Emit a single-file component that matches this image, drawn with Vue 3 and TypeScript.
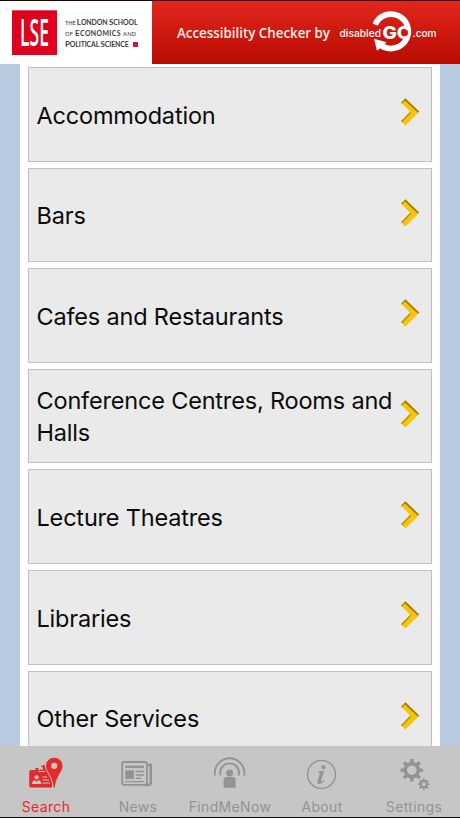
<script setup lang="ts">
interface Tab {
  id: string
  label: string
}

const categories: string[] = [
  'Accommodation',
  'Bars',
  'Cafes and Restaurants',
  'Conference Centres, Rooms and Halls',
  'Lecture Theatres',
  'Libraries',
  'Other Services',
]

const tabs: Tab[] = [
  { id: 'search', label: 'Search' },
  { id: 'news', label: 'News' },
  { id: 'find', label: 'FindMeNow' },
  { id: 'about', label: 'About' },
  { id: 'settings', label: 'Settings' },
]

const activeTab = 'search'

function gearPath(cx: number, cy: number, outer: number, inner: number, hole: number): string {
  const teeth = 8
  const step = (Math.PI * 2) / teeth
  const points: string[] = []
  for (let i = 0; i < teeth; i++) {
    const mid = i * step
    const corners: [number, number][] = [
      [mid - step * 0.28, inner],
      [mid - step * 0.17, outer],
      [mid + step * 0.17, outer],
      [mid + step * 0.28, inner],
    ]
    for (const [a, r] of corners) {
      points.push(`${(cx + Math.cos(a) * r).toFixed(2)} ${(cy + Math.sin(a) * r).toFixed(2)}`)
    }
  }
  return `M${points.join('L')}Z M${cx + hole} ${cy}a${hole} ${hole} 0 1 0 ${-2 * hole} 0a${hole} ${hole} 0 1 0 ${2 * hole} 0Z`
}

const bigGear = gearPath(15.8, 14.2, 11.4, 8.4, 4.8)
const smallGear = gearPath(27.8, 28.2, 6, 4.2, 2)
</script>

<template>
  <div class="screen">
    <header class="header">
      <div class="school">
        <svg class="lse" width="57" height="63" viewBox="0 1 57 63">
          <rect x="12" y="10.3" width="45" height="44.7" fill="#e2001f" />
          <text x="20" y="46" textLength="29" lengthAdjust="spacingAndGlyphs" fill="#fff">LSE</text>
        </svg>
        <div class="school-name">
          <div class="line one"><small>THE&nbsp;</small><span>L</span><b>ONDON&nbsp;</b><span>S</span><b>CHOOL</b></div>
          <div class="line two"><small>OF&nbsp;</small><span>E</span><b>CONOMICS&nbsp;</b><small>AND</small></div>
          <div class="line three"><span>P</span><b>OLITICAL&nbsp;</b><span>S</span><b>CIENCE</b><i class="square"></i></div>
        </div>
      </div>
      <div class="banner">
        <svg width="308" height="63" viewBox="152 1 308 63">
          <text class="checker" x="177" y="37.5" textLength="153" lengthAdjust="spacingAndGlyphs">Accessibility Checker by</text>
          <path d="M375.2 24.6A17.2 17.2 0 1 1 383.2 46.6" fill="none" stroke="#fff" stroke-width="5.8" />
          <path d="M374 38.8L386.6 42.2L384.4 44.2L386.5 45.3L383 50.2L380.3 48.2L377 50.8Z" fill="#fff" />
          <text class="disabled" x="339.5" y="36.5" textLength="41.5" lengthAdjust="spacingAndGlyphs">disabled</text>
          <text class="go" x="382.4" y="39.1" textLength="29.2" lengthAdjust="spacingAndGlyphs">GO</text>
          <ellipse cx="404.9" cy="32.8" rx="3.1" ry="3.5" fill="#ce1910" />
          <text class="disabled" x="412.6" y="36.5" textLength="24" lengthAdjust="spacingAndGlyphs">.com</text>
        </svg>
      </div>
    </header>

    <main class="content">
      <ul class="list">
        <li v-for="name in categories" :key="name" class="card">
          <span class="name">{{ name }}</span>
          <svg class="chevron" width="20" height="30" viewBox="0 0 20 30">
            <path d="M1 5.8L5.4 1.2L19.4 14.8L5.4 28.4L1 24.2L10.2 14.8Z" fill="#f6c40f" />
            <path d="M5.4 1.2L19.4 14.8L17.4 15.2L4.8 3.6L2 6.6L1 5.8Z" fill="#a3820f" />
            <path d="M1 24.2L10.2 14.8L11.2 15.8L2.2 25.2Z" fill="#b8920e" />
          </svg>
        </li>
      </ul>
    </main>

    <nav class="tabs">
      <div v-for="tab in tabs" :key="tab.id" class="tab" :class="[tab.id, { active: tab.id === activeTab }]">
        <svg v-if="tab.id === 'search'" class="icon" width="36" height="36" viewBox="0 0 36 36">
          <path d="M3 14H7.5V12H10.5V14H12L13 10.5A3.5 3.5 0 0 1 18 10L24 23V31.5H3Q1.2 31.5 1.2 29.7V15.8Q1.2 14 3 14Z" fill="currentColor" />
          <circle cx="13.5" cy="12.3" r="1.5" fill="#c6c6c6" />
          <path d="M10.3 15.5H17" stroke="#c6c6c6" stroke-width="1" />
          <circle cx="8.6" cy="21.3" r="2.1" fill="#c6c6c6" />
          <path d="M4 28Q4 24.2 7 24.2L8.6 25.8L10.2 24.2Q13.2 24.2 13.2 28Z" fill="#c6c6c6" />
          <path d="M14.5 21H19M14.5 24H21M14.5 27H22" stroke="#c6c6c6" stroke-width="1.1" />
          <path d="M26.2 1.2A8.7 8.7 0 0 1 35 9.9C35 16 28.2 20 27.2 32H25.2C24.5 20 17.5 16 17.5 9.9A8.7 8.7 0 0 1 26.2 1.2Z" fill="currentColor" stroke="#c6c6c6" stroke-width="1" />
          <circle cx="26.2" cy="9.8" r="3.1" fill="#c6c6c6" />
        </svg>
        <svg v-else-if="tab.id === 'news'" class="icon" width="36" height="36" viewBox="0 0 36 36">
          <g fill="none" stroke="currentColor">
            <rect x="2.2" y="6" width="24.7" height="22.8" rx="1.5" stroke-width="1.8" />
            <path d="M27.3 9H30.8V26.5Q30.8 29 27.8 29H24.3" stroke-width="2.5" />
            <path d="M5.3 10.8H23.8" stroke-width="2.3" />
            <path d="M15.8 15.5H23.8M15.8 19H23.8M15.8 22.3H21.3M5.3 25.6H23.8" stroke-width="1.4" />
          </g>
          <rect x="5.3" y="14.3" width="8.6" height="8.8" fill="currentColor" />
        </svg>
        <svg v-else-if="tab.id === 'find'" class="icon" width="36" height="36" viewBox="0 0 36 36">
          <g fill="none" stroke="currentColor" stroke-width="1.9">
            <path d="M3 19.5A14.8 14.8 0 1 1 32.2 19.5" />
            <path d="M8.6 19.5A9.4 9.4 0 1 1 26.6 19.5" />
          </g>
          <circle cx="17.6" cy="17" r="3.4" fill="currentColor" />
          <path d="M11.6 31.7V23.8Q11.6 21.1 14.6 21.1H20.6Q23.6 21.1 23.6 23.8V31.7Z" fill="currentColor" />
        </svg>
        <svg v-else-if="tab.id === 'about'" class="icon" width="36" height="36" viewBox="0 0 36 36">
          <circle cx="17.5" cy="18.4" r="14" fill="none" stroke="currentColor" stroke-width="1.4" />
          <circle cx="19.4" cy="11.3" r="2" fill="currentColor" />
          <path transform="translate(0 .8)" d="M14.4 14.8L20.1 14L17 24.3Q16.8 25.4 18 24.7L20 22.9L20.7 23.6Q17.8 27.2 15 27.2Q12.8 27.1 13.5 24.3L15.9 16.5Q16 15.8 14.2 15.8Z" fill="currentColor" />
        </svg>
        <svg v-else class="icon" width="36" height="36" viewBox="0 0 36 36">
          <path :d="bigGear" fill="currentColor" fill-rule="evenodd" />
          <path :d="smallGear" fill="currentColor" fill-rule="evenodd" />
        </svg>
        <span class="label">{{ tab.label }}</span>
      </div>
    </nav>
  </div>
</template>

<style>
body {
  margin: 0;
  background: #000;
}
</style>

<style scoped>
.screen {
  width: 460px;
  height: 818px;
  box-sizing: border-box;
  border-top: 1px solid #250000;
  border-bottom: 1px solid #111;
  display: flex;
  flex-direction: column;
  overflow: hidden;
  font-family: Inter, "Liberation Sans", sans-serif;
}
.header {
  display: flex;
  flex: 0 0 63px;
}
.header svg {
  display: block;
  overflow: visible;
}
.school {
  width: 152px;
  display: flex;
  gap: 8px;
  background: #fff;
}
.banner {
  width: 308px;
  background: linear-gradient(#e1261c, #b90b02);
}
.lse {
  flex: none;
  font: 600 38px "Open Sans", sans-serif;
}
.school-name {
  padding-top: 16px;
  font-family: Lato, sans-serif;
  font-weight: 700;
  font-size: 8px;
  color: #3c3c3c;
}
.line {
  display: flex;
  align-items: baseline;
  height: 10.8px;
  line-height: 10.8px;
  white-space: nowrap;
}
.line b {
  font-size: 6.9px;
  font-weight: 700;
}
.line small {
  font-size: 5.6px;
  font-weight: 500;
}
.one {
  letter-spacing: -0.1px;
}
.two {
  letter-spacing: 0.38px;
}
.three {
  letter-spacing: -0.12px;
}
.square {
  width: 5px;
  height: 5px;
  margin-left: 4px;
  background: #d8142c;
}
.checker {
  font: 600 14.5px "Open Sans", sans-serif;
  fill: #fff0e8;
}
.disabled {
  font: 500 10.5px Inter, sans-serif;
  fill: #fff;
}
.go {
  font: 800 17.6px Inter, sans-serif;
  fill: #fff;
}
.content {
  flex: 1;
  min-height: 0;
  overflow: hidden;
  background: #fff;
  border: solid #b8cae0;
  border-width: 0 20px;
}
.list {
  list-style: none;
  margin: 0;
  padding: 3px 8px 0;
  display: flex;
  flex-direction: column;
  gap: 6px;
}
.card {
  box-sizing: border-box;
  height: 94.6px;
  flex: none;
  display: flex;
  align-items: center;
  justify-content: space-between;
  padding: 0 11px 0 7.5px;
  background: #eaeaea;
  border: 1px solid #bfc0c2;
}
.name {
  width: 362px;
  font-size: 23.5px;
  line-height: 32px;
  letter-spacing: -0.18px;
  color: #0b0b0b;
  padding-top: 2.5px;
}
.chevron {
  flex: none;
  margin-bottom: 4px;
}
.tabs {
  flex: 0 0 71px;
  display: flex;
  justify-content: space-between;
  background: #c6c6c6;
}
.tab {
  width: 92px;
  display: flex;
  flex-direction: column;
  align-items: center;
  color: #939393;
}
.active {
  color: #e32b2c;
}
.icon {
  display: block;
  margin-top: 10px;
}
.label {
  margin-top: 6px;
  font-size: 14px;
  line-height: 18px;
  letter-spacing: 0.35px;
  white-space: nowrap;
}
</style>
